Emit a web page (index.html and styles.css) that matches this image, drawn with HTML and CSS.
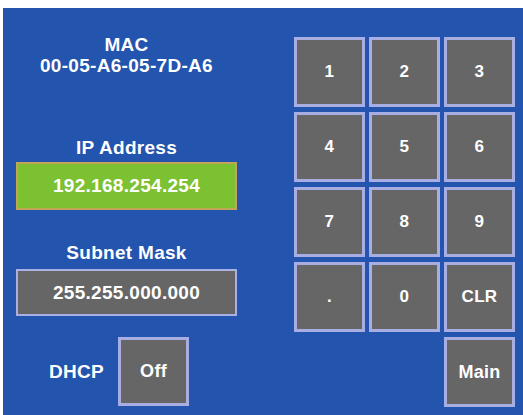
FILE: index.html
```html
<!DOCTYPE html>
<html>
<head>
<meta charset="utf-8">
<link rel="stylesheet" href="styles.css">
</head>
<body>
<div class="screen">
  <div class="left">
    <div class="mac">
      <div>MAC</div>
      <div>00-05-A6-05-7D-A6</div>
    </div>
    <div class="label ip-label">IP Address</div>
    <div class="field field-green">192.168.254.254</div>
    <div class="label subnet-label">Subnet Mask</div>
    <div class="field field-gray">255.255.000.000</div>
    <div class="dhcp-row">
      <span class="dhcp-label">DHCP</span>
      <div class="key key-dhcp">Off</div>
    </div>
  </div>
  <div class="keypad">
    <div class="key">1</div>
    <div class="key">2</div>
    <div class="key">3</div>
    <div class="key">4</div>
    <div class="key">5</div>
    <div class="key">6</div>
    <div class="key">7</div>
    <div class="key">8</div>
    <div class="key">9</div>
    <div class="key">.</div>
    <div class="key">0</div>
    <div class="key">CLR</div>
    <div class="key key-main">Main</div>
  </div>
</div>
</body>
</html>
```
FILE: styles.css
```css
html, body {
  margin: 0;
  padding: 0;
  background: #ffffff;
}
body {
  width: 523px;
  height: 415px;
  overflow: hidden;
  font-family: "Liberation Sans", Arial, sans-serif;
  font-weight: bold;
  color: #ffffff;
}
.screen {
  margin: 8px 0 0 3px;
  height: 407px;
  background: #2354ae;
  display: flex;
}
.left {
  width: 221px;
  padding: 0 13px;
  display: flex;
  flex-direction: column;
  align-items: center;
}
.mac {
  margin-top: 26px;
  font-size: 19px;
  line-height: 21px;
  text-align: center;
  letter-spacing: 0.3px;
}
.label {
  font-size: 19px;
  line-height: 21px;
  letter-spacing: 0.3px;
  text-align: center;
}
.ip-label {
  margin-top: 61px;
}
.subnet-label {
  margin-top: 32px;
}
.field {
  box-sizing: border-box;
  width: 221px;
  display: flex;
  align-items: center;
  justify-content: center;
  font-size: 19px;
  letter-spacing: 0.3px;
}
.field-green {
  margin-top: 4px;
  height: 48px;
  background: #7cc132;
  border: 2px solid #c4a456;
}
.field-gray {
  margin-top: 6px;
  height: 47px;
  background: #666666;
  border: 2px solid #aab0e4;
}
.dhcp-row {
  align-self: stretch;
  margin-top: 21px;
  padding-left: 33px;
  display: flex;
  align-items: center;
  gap: 14px;
}
.dhcp-label {
  font-size: 19px;
  letter-spacing: 0.3px;
}
.keypad {
  margin-left: 44px;
  padding-top: 29px;
  display: grid;
  grid-template-columns: repeat(3, 71px);
  grid-auto-rows: 70px;
  column-gap: 4px;
  row-gap: 5px;
  align-content: start;
}
.key {
  box-sizing: border-box;
  width: 71px;
  height: 70px;
  background: #666666;
  border: 3px solid #a9aee2;
  display: flex;
  align-items: center;
  justify-content: center;
  font-size: 17px;
  letter-spacing: 0.3px;
}
.key-main {
  grid-column: 3;
  font-size: 18px;
}
.key-dhcp {
  height: 69px;
  font-size: 18px;
}
```
